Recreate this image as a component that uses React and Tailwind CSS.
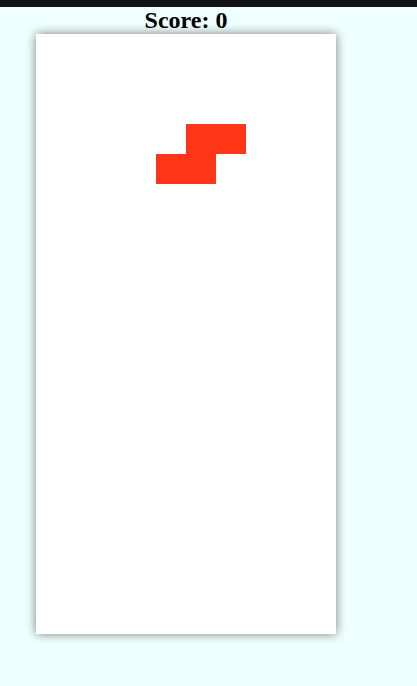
const COLS = 10
const ROWS = 20

// current S piece on the board
const piece = [
  [3, 5], [3, 6],
  [4, 4], [4, 5],
]

export default function App() {
  const filled = new Set(piece.map(([r, c]) => r * COLS + c))
  const cells = []
  for (let i = 0; i < ROWS * COLS; i++) {
    cells.push(
      <div key={i} className={filled.has(i) ? "bg-[#ff3517]" : "bg-white"} />
    )
  }

  return (
    <div className="min-h-[686px] bg-[#f0ffff]" style={{ fontFamily: '"Liberation Serif", "Times New Roman", serif' }}>
      <div className="h-[7px] bg-[#121218]" />
      <div className="pl-[36px]">
        <div className="w-[300px]">
          <h2 className="text-center text-[24px] font-bold leading-[27px] text-black">Score: 0</h2>
          <div className="grid grid-cols-[repeat(10,30px)] grid-rows-[repeat(20,30px)] w-[300px] h-[600px] bg-white shadow-[0_0_10px_rgba(0,0,0,0.5)]">
            {cells}
          </div>
        </div>
      </div>
    </div>
  )
}
